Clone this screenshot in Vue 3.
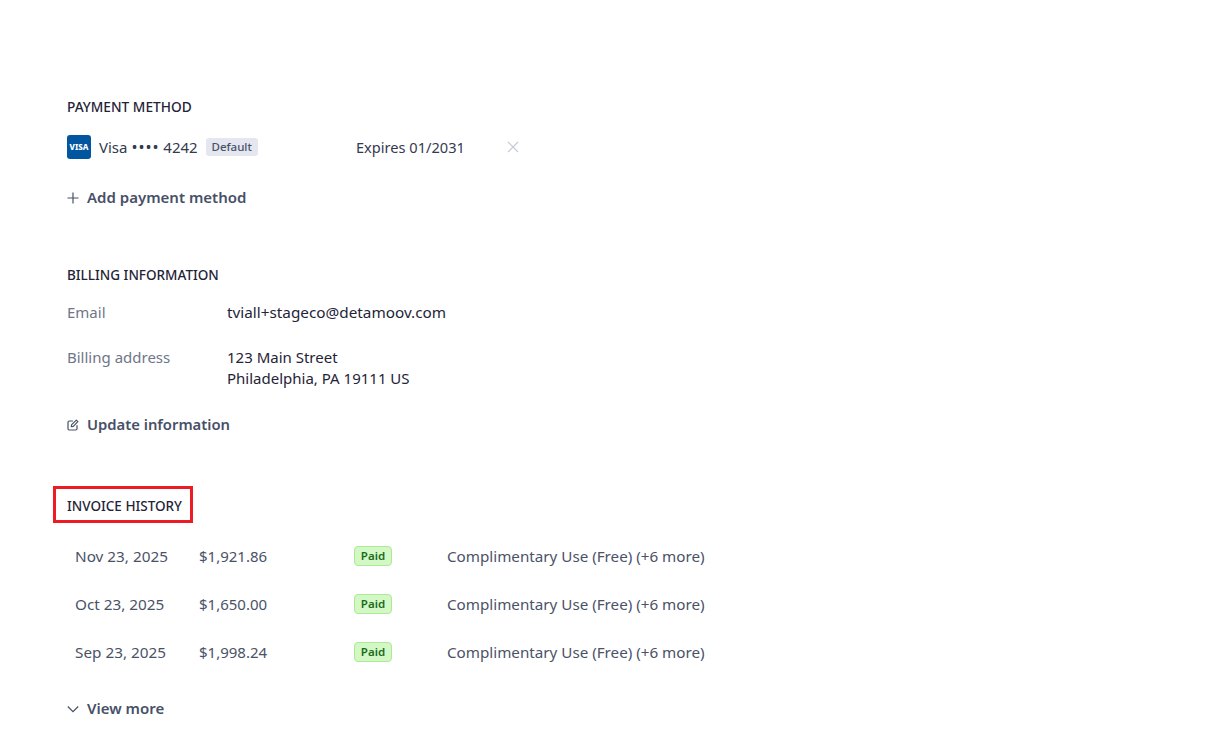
<script setup>
const invoices = [
  { date: 'Nov 23, 2025', amount: '$1,921.86' },
  { date: 'Oct 23, 2025', amount: '$1,650.00' },
  { date: 'Sep 23, 2025', amount: '$1,998.24' },
]
</script>

<template>
  <main class="page">
    <section class="payment">
      <h2 class="heading payment-heading">PAYMENT METHOD</h2>
      <div class="card-row">
        <div class="card-id">
          <span class="visa"><span class="visa-text">VISA</span></span>
          <span class="card-name">Visa <span class="dots">••••</span> 4242</span>
          <span class="default-tag">Default</span>
        </div>
        <span class="expires">Expires 01/2031</span>
        <svg class="close" width="12" height="12" viewBox="0 0 12 12" fill="none" stroke="#c4ccd8" stroke-width="1.2"><path d="M1 1l10 10M11 1L1 11"/></svg>
      </div>
      <div class="action add">
        <svg width="12" height="12" viewBox="0 0 12 12" fill="none" stroke="#475067" stroke-width="1.2"><path d="M6 .5v11M.5 6h11"/></svg>
        <span>Add payment method</span>
      </div>
    </section>

    <section class="billing">
      <h2 class="heading">BILLING INFORMATION</h2>
      <div class="info-row email">
        <span class="label">Email</span>
        <span class="value email-value">tviall+stageco@detamoov.com</span>
      </div>
      <div class="info-row address">
        <span class="label">Billing address</span>
        <span class="value">123 Main Street<br />Philadelphia, PA 19111 US</span>
      </div>
      <div class="action update">
        <svg width="12" height="12" viewBox="0 0 12 12" fill="none" stroke="#475067" stroke-width="1.2" stroke-linecap="round" stroke-linejoin="round"><path d="M5.5 2H2.2C1.5 2 1 2.5 1 3.2v6.6c0 .7.5 1.2 1.2 1.2h6.6c.7 0 1.2-.5 1.2-1.2V6.5"/><path d="M9.3 1.1l1.6 1.6-4.6 4.6-2 .4.4-2z"/></svg>
        <span>Update information</span>
      </div>
    </section>

    <section class="invoices">
      <div class="heading-box"><h2 class="heading">INVOICE HISTORY</h2></div>
      <ul class="invoice-list">
        <li v-for="invoice in invoices" :key="invoice.date" class="invoice">
          <span class="date">{{ invoice.date }}</span>
          <span class="amount">{{ invoice.amount }}</span>
          <span class="status"><span class="paid">Paid</span></span>
          <span class="plan">Complimentary Use (Free) (+6 more)</span>
        </li>
      </ul>
      <div class="action more">
        <svg width="12" height="12" viewBox="0 0 12 12" fill="none" stroke="#475067" stroke-width="1.2"><path d="M.8 3.5L6 8.7l5.2-5.2"/></svg>
        <span>View more</span>
      </div>
    </section>
  </main>
</template>

<style scoped>
.page {
  box-sizing: border-box;
  width: 1208px;
  height: 743px;
  overflow: hidden;
  padding: 97px 0 0 67px;
  font-family: "Noto Sans", "Open Sans", sans-serif;
  font-size: 15px;
  line-height: 21px;
  color: #1f2438;
  background: #fff;
}
.heading {
  margin: 0;
  font-size: 13.5px;
  line-height: 20px;
  font-weight: 500;
  color: #1f2438;
}
.payment-heading { font-size: 13.7px; }
.card-row {
  display: flex;
  align-items: center;
  height: 24px;
  margin-top: 18px;
}
.card-id {
  display: flex;
  align-items: center;
  width: 289px;
}
.visa {
  display: flex;
  align-items: center;
  justify-content: center;
  width: 24px;
  height: 24px;
  border-radius: 3px;
  background: #01569f;
}
.visa-text {
  font-size: 8px;
  line-height: 8px;
  font-weight: 800;
  color: #fff;
}
.card-name { margin-left: 8px; color: #343a4f; }
.dots { letter-spacing: 1px; font-size: 16px; }
.default-tag {
  margin-left: 8px;
  box-sizing: border-box;
  width: 52px;
  text-align: center;
  height: 18px;
  line-height: 18px;
  border-radius: 3px;
  background: #e4e7ef;
  color: #4a5268;
  font-size: 11.5px;
  font-weight: 500;
}
.expires { width: 150px; color: #343a4f; font-size: 14.6px; }
.close { margin-left: 1px; margin-top: -1px; }
.action {
  display: flex;
  align-items: center;
  gap: 8px;
  height: 21px;
  font-weight: 600;
  color: #475067;
}
.add { margin-top: 28px; }
.billing { margin-top: 57px; }
.info-row { display: flex; }
.email { margin-top: 17px; }
.address { margin-top: 24px; }
.label { width: 160px; color: #6f7689; }
.value { color: #1f2438; }
.email-value { font-size: 15.3px; }
.update { margin-top: 25px; font-size: 14.8px; }
.invoices { margin-top: 51px; }
.heading-box {
  box-sizing: border-box;
  width: 140px;
  height: 37px;
  margin-left: -14px;
  padding: 7px 0 0 11px;
  border: 3px solid #ed1c24;
}
.invoice-list { list-style: none; margin: 9px 0 0; padding: 0; }
.invoice {
  display: flex;
  align-items: center;
  height: 48px;
  padding-left: 8px;
  color: #4a5268;
}
.date { width: 124px; font-size: 15.3px; }
.amount { width: 155px; }
.status { width: 93px; display: flex; }
.plan { font-size: 15.2px; }
.paid {
  box-sizing: border-box;
  width: 38px;
  height: 20px;
  line-height: 18px;
  text-align: center;
  border: 1px solid #a9eb90;
  border-radius: 4px;
  background: #d3f8c6;
  color: #196c1e;
  font-size: 11.5px;
  font-weight: 600;
}
.more { margin-top: 22px; }
</style>

<style>
html, body { margin: 0; background: #fff; }
</style>
